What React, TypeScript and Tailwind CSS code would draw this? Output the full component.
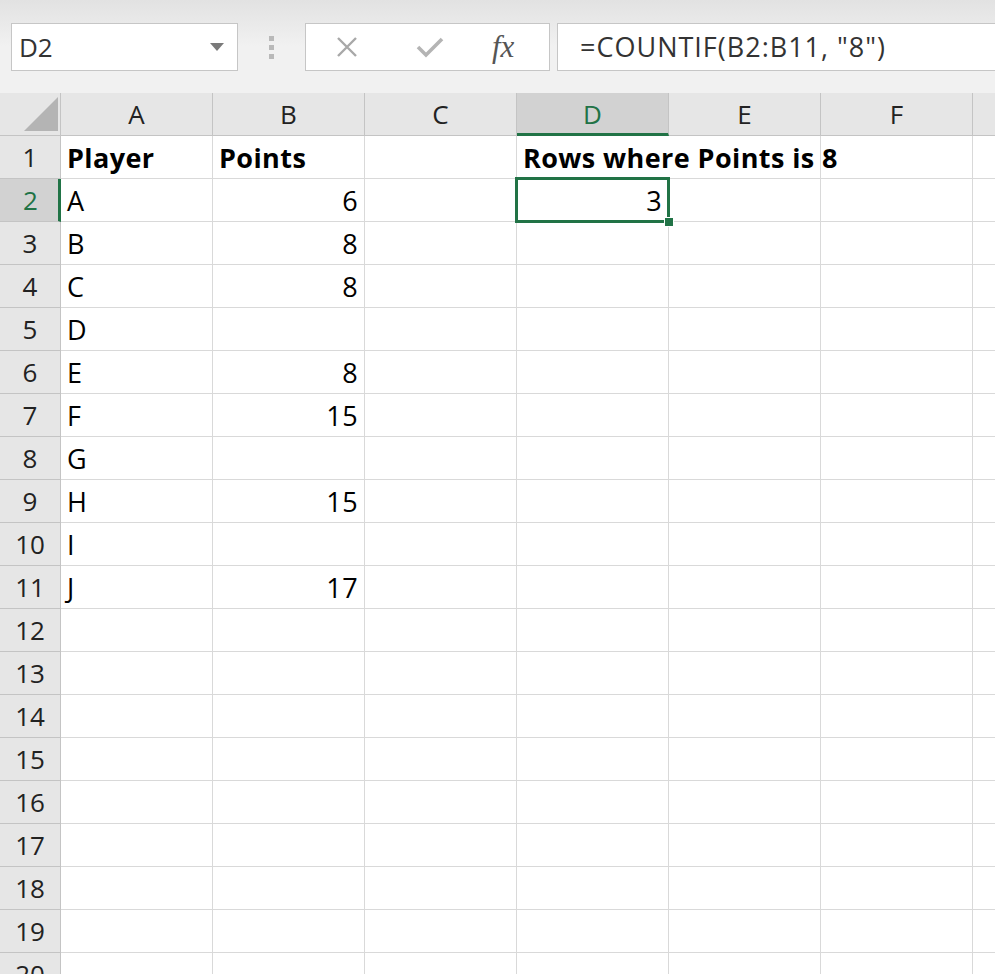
const COLS = ["A", "B", "C", "D", "E", "F", ""];

const DATA: Record<number, [string, string]> = {
  2: ["A", "6"],
  3: ["B", "8"],
  4: ["C", "8"],
  5: ["D", ""],
  6: ["E", "8"],
  7: ["F", "15"],
  8: ["G", ""],
  9: ["H", "15"],
  10: ["I", ""],
  11: ["J", "17"],
};

const FONT = { fontFamily: "'Open Sans', 'Noto Sans', sans-serif" };

function FormulaBar() {
  return (
    <div className="flex h-[93px] items-start bg-gradient-to-b from-[#e2e2e2] via-[#f1f1f1] to-[#f1f1f1] pt-[23px]">
      <div className="ml-[11px] flex h-[48px] w-[227px] items-center justify-between border border-[#c6c6c6] bg-white pl-[7px] pr-[12px]">
        <span className="text-[26px] text-[#333]">D2</span>
        <svg width="16" height="10" viewBox="0 0 16 10">
          <path d="M1 1 L15 1 L8 9 Z" fill="#7a7a7a" />
        </svg>
      </div>
      <div className="flex h-[48px] w-[67px] flex-col items-center justify-center gap-[4px]">
        <span className="h-[5px] w-[5px] bg-[#b9b9b9]" />
        <span className="h-[5px] w-[5px] bg-[#b9b9b9]" />
        <span className="h-[5px] w-[5px] bg-[#b9b9b9]" />
      </div>
      <div className="flex h-[48px] w-[245px] items-center border border-[#c6c6c6] bg-white">
        <svg className="ml-[30px]" width="22" height="22" viewBox="0 0 22 22">
          <path d="M2 2 L20 20 M20 2 L2 20" stroke="#a8a8a8" strokeWidth="2.4" />
        </svg>
        <svg className="ml-[58px]" width="28" height="22" viewBox="0 0 28 22">
          <path d="M2 11 L10 19 L26 3" stroke="#b4b4b4" strokeWidth="3.6" fill="none" />
        </svg>
        <span className="ml-[48px] text-[31px] italic text-[#555]" style={{ fontFamily: "'Liberation Serif', serif" }}>
          fx
        </span>
      </div>
      <div className="ml-[7px] flex h-[48px] flex-1 items-center border border-r-0 border-[#c6c6c6] bg-white pl-[22px]">
        <span className="text-[27px] tracking-[1px] text-[#333]">=COUNTIF(B2:B11, "8")</span>
      </div>
    </div>
  );
}

function HeaderRow() {
  return (
    <div className="flex h-[43px] bg-[#e6e6e6]">
      <div className="relative w-[61px] shrink-0 border-r border-b border-[#c4c4c4]">
        <svg className="absolute left-[23px] top-[3px]" width="36" height="36" viewBox="0 0 36 36">
          <path d="M35 1 L35 35 L1 35 Z" fill="#b4b4b4" />
        </svg>
      </div>
      {COLS.map((c, i) =>
        c === "D" ? (
          <div
            key={i}
            className="flex w-[152px] shrink-0 items-center justify-center border-r border-b-[3px] border-r-[#c4c4c4] border-b-[#217346] bg-[#d2d2d2] pt-[3px] text-[26px] text-[#217346]"
          >
            {c}
          </div>
        ) : (
          <div
            key={i}
            className="flex w-[152px] shrink-0 items-center justify-center border-r border-b border-[#c4c4c4] text-[26px] text-[#222]"
          >
            {c}
          </div>
        )
      )}
    </div>
  );
}

function Row({ n }: { n: number }) {
  const d = DATA[n];
  const sel = n === 2;
  return (
    <div className="flex h-[43px]">
      {sel ? (
        <div className="flex w-[61px] shrink-0 items-center justify-center border-r-[3px] border-b border-r-[#217346] border-b-[#c4c4c4] bg-[#d2d2d2] pl-[3px] text-[26px] text-[#217346]">
          {n}
        </div>
      ) : (
        <div className="flex w-[61px] shrink-0 items-center justify-center border-r border-b border-[#c4c4c4] bg-[#e6e6e6] text-[26px] text-[#222]">
          {n}
        </div>
      )}
      {COLS.map((c, i) => {
        let content: React.ReactNode = null;
        let bold = false;
        let right = false;
        let spill = false;
        if (n === 1 && c === "A") { content = "Player"; bold = true; }
        if (n === 1 && c === "B") { content = "Points"; bold = true; }
        if (n === 1 && c === "D") { content = "Rows where Points is 8"; bold = true; spill = true; }
        if (d && c === "A") content = d[0];
        if (d && c === "B") { content = d[1]; right = true; }
        if (n === 2 && c === "D") { content = "3"; right = true; }
        const active = n === 2 && c === "D";
        return (
          <div
            key={i}
            className={`relative flex w-[152px] shrink-0 items-center border-b border-[#d9d9d9] px-[6px] pt-[2px] text-[27px] tracking-[0.4px] text-black ${
              spill ? "z-10 border-r-0 pr-0" : "border-r"
            } ${n === 1 && c === "E" ? "border-r" : ""} ${right ? "justify-end" : "justify-start"} ${bold ? "font-bold" : ""}`}
          >
            <span className="whitespace-nowrap">{content}</span>
            {active && (
              <>
                <div className="pointer-events-none absolute -top-[2px] -left-[2px] z-10 h-[46px] w-[155px] border-[3px] border-[#217346]" />
                <div className="absolute -right-[6px] -bottom-[6px] z-20 h-[10px] w-[10px] border border-white bg-[#217346]" />
              </>
            )}
          </div>
        );
      })}
    </div>
  );
}

export default function App() {
  const rows = Array.from({ length: 20 }, (_, i) => i + 1);
  return (
    <div className="h-[974px] w-[995px] overflow-hidden bg-white" style={FONT}>
      <FormulaBar />
      <HeaderRow />
      {rows.map((n) => (
        <Row key={n} n={n} />
      ))}
    </div>
  );
}
